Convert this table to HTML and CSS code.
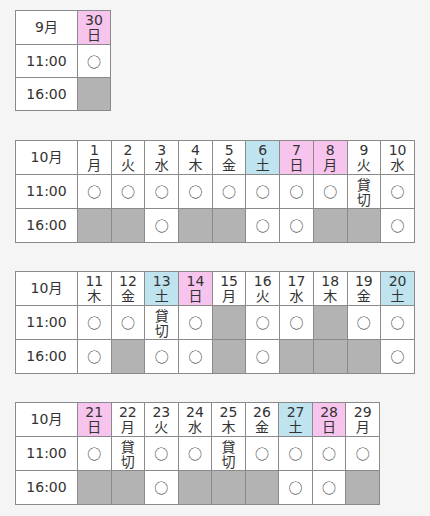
FILE: index.html
```html
<!DOCTYPE html>
<html lang="ja">
<head>
<meta charset="utf-8">
<link rel="stylesheet" href="styles.css">
</head>
<body>
<div class="wrap">
<table class="cal t1">
  <tr><th class="m">9月</th><th class="sun">30<br>日</th></tr>
  <tr><td class="time">11:00</td><td class="ok">○</td></tr>
  <tr><td class="time">16:00</td><td class="no"></td></tr>
</table>

<table class="cal t10">
  <tr><th class="m">10月</th><th>1<br>月</th><th>2<br>火</th><th>3<br>水</th><th>4<br>木</th><th>5<br>金</th><th class="sat">6<br>土</th><th class="sun">7<br>日</th><th class="sun">8<br>月</th><th>9<br>火</th><th>10<br>水</th></tr>
  <tr><td class="time">11:00</td><td class="ok">○</td><td class="ok">○</td><td class="ok">○</td><td class="ok">○</td><td class="ok">○</td><td class="ok">○</td><td class="ok">○</td><td class="ok">○</td><td class="rent">貸<br>切</td><td class="ok">○</td></tr>
  <tr><td class="time">16:00</td><td class="no"></td><td class="no"></td><td class="ok">○</td><td class="no"></td><td class="no"></td><td class="ok">○</td><td class="ok">○</td><td class="no"></td><td class="no"></td><td class="ok">○</td></tr>
</table>

<table class="cal t10">
  <tr><th class="m">10月</th><th>11<br>木</th><th>12<br>金</th><th class="sat">13<br>土</th><th class="sun">14<br>日</th><th>15<br>月</th><th>16<br>火</th><th>17<br>水</th><th>18<br>木</th><th>19<br>金</th><th class="sat">20<br>土</th></tr>
  <tr><td class="time">11:00</td><td class="ok">○</td><td class="ok">○</td><td class="rent">貸<br>切</td><td class="ok">○</td><td class="no"></td><td class="ok">○</td><td class="ok">○</td><td class="no"></td><td class="ok">○</td><td class="ok">○</td></tr>
  <tr><td class="time">16:00</td><td class="ok">○</td><td class="no"></td><td class="ok">○</td><td class="ok">○</td><td class="no"></td><td class="ok">○</td><td class="no"></td><td class="no"></td><td class="no"></td><td class="ok">○</td></tr>
</table>

<table class="cal t9">
  <tr><th class="m">10月</th><th class="sun">21<br>日</th><th>22<br>月</th><th>23<br>火</th><th>24<br>水</th><th>25<br>木</th><th>26<br>金</th><th class="sat">27<br>土</th><th class="sun">28<br>日</th><th>29<br>月</th></tr>
  <tr><td class="time">11:00</td><td class="ok">○</td><td class="rent">貸<br>切</td><td class="ok">○</td><td class="ok">○</td><td class="rent">貸<br>切</td><td class="ok">○</td><td class="ok">○</td><td class="ok">○</td><td class="ok">○</td></tr>
  <tr><td class="time">16:00</td><td class="no"></td><td class="no"></td><td class="ok">○</td><td class="no"></td><td class="no"></td><td class="no"></td><td class="ok">○</td><td class="ok">○</td><td class="no"></td></tr>
</table>
</div>
</body>
</html>
```

FILE: styles.css
```css
html, body {
  margin: 0;
  padding: 0;
  background: #f5f5f5;
}
body {
  font-family: "DejaVu Sans", "Noto Sans CJK JP", sans-serif;
  font-size: 14px;
  color: #333;
}
.wrap {
  padding: 10px 0 0 15px;
}
.cal {
  border-collapse: collapse;
  table-layout: fixed;
  background: #fff;
  margin-bottom: 28px;
}
.t1 { width: 96px; margin-bottom: 29px; }
.t10 { width: 400px; }
.t9 { width: 365px; }
.cal th, .cal td {
  border: 1px solid #8a8a8a;
  padding: 0;
  text-align: center;
  vertical-align: middle;
  height: 33px;
  font-weight: normal;
  line-height: 15px;
}
.t1 td { height: 32px; }
.cal th.m, .cal td.time {
  width: 61px;
}
.cal th {
  font-size: 14px;
}
.cal th.sun { background: #f7c4ee; }
.cal th.sat { background: #bfe4ef; }
.cal td.no { background: #b3b3b3; }
.cal td.ok {
  font-family: "Noto Sans CJK JP", sans-serif;
  font-size: 14px;
}
.cal td.rent {
  font-family: "Noto Sans CJK JP", sans-serif;
  line-height: 15px;
}
```
